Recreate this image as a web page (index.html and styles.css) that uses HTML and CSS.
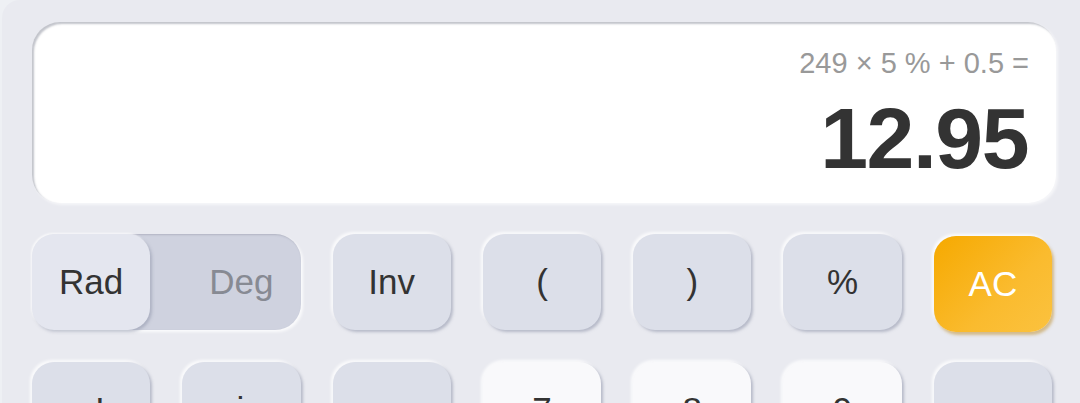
FILE: index.html
```html
<!DOCTYPE html>
<html lang="en">
<head>
    <meta charset="UTF-8">
    <meta name="viewport" content="width=device-width, initial-scale=1.0">
    <title>Calculator</title>
    <link rel="stylesheet" href="styles.css">
</head>
<body>
    <div class="calculator">
        <div class="display">
            <div class="expression">249 × 5 % + 0.5 =</div>
            <div class="result">12.95</div>
        </div>

        <div class="keypad">
            <div class="toggle">
                <button class="toggle-on">Rad</button>
                <button class="toggle-off">Deg</button>
            </div>
            <button class="key">Inv</button>
            <button class="key">(</button>
            <button class="key">)</button>
            <button class="key">%</button>
            <button class="key clear">AC</button>

            <button class="key">x!</button>
            <button class="key">sin</button>
            <button class="key">e</button>
            <button class="key digit">7</button>
            <button class="key digit">8</button>
            <button class="key digit">9</button>
            <button class="key">−</button>
        </div>
    </div>
</body>
</html>
```

FILE: styles.css
```css
html, body {
    margin: 0;
    height: 403px;
    overflow: hidden;
}

body {
    font-family: 'Liberation Sans', Arial, sans-serif;
    background-color: #eef0f4;
    color: #333;
}

.calculator {
    margin-left: 2px;
    padding: 22px 24px 40px 30px;
    background-color: #e9eaf0;
    border-radius: 18px 0 0 0;
}

.display {
    width: 1024px;
    box-sizing: border-box;
    padding: 25px 27px 21px;
    background: #fff;
    border-radius: 28px;
    box-shadow: inset 2px 2px 2px rgba(120, 124, 140, 0.45),
                2px 2px 3px rgba(255, 255, 255, 0.6);
    text-align: right;
}

.expression {
    font-size: 29px;
    line-height: 33px;
    color: #999;
}

.result {
    margin-top: 14px;
    font-size: 86px;
    line-height: 88px;
    font-weight: bold;
    letter-spacing: -1.5px;
    margin-right: 1px;
    color: #333;
}

.keypad {
    width: 1020px;
    margin-top: 31px;
    display: grid;
    grid-template-columns: repeat(7, 1fr);
    grid-auto-rows: 96px;
    gap: 32px;
}

button {
    font-family: inherit;
    font-size: 35px;
    color: #333;
    border: none;
    padding: 0;
    cursor: pointer;
}

.key {
    background-color: #dcdfe9;
    border-radius: 22px;
    box-shadow: 2px 2px 3px rgba(140, 146, 168, 0.55),
                -2px -2px 3px rgba(255, 255, 255, 0.8);
}

.digit {
    background-color: #f9f9fb;
}

.clear {
    margin-top: 2px;
    margin-bottom: -2px;
    color: #fff;
    background: linear-gradient(135deg, #f6a900 0%, #fabb2e 60%, #fbc23f 100%);
    box-shadow: 2px 3px 3px rgba(190, 140, 40, 0.5),
                -2px -2px 3px rgba(255, 255, 255, 0.8);
}

.toggle {
    grid-column: span 2;
    display: grid;
    grid-template-columns: 1fr 1fr;
    gap: 32px;
    background-color: #cfd2df;
    border-radius: 26px;
    box-shadow: inset 1px 1px 2px rgba(120, 124, 140, 0.35),
                2px 2px 3px rgba(255, 255, 255, 0.8);
}

.toggle-on {
    background-color: #e4e6ef;
    border-radius: 22px;
    box-shadow: 2px 2px 3px rgba(140, 146, 168, 0.5),
                -1px -1px 2px rgba(255, 255, 255, 0.8);
}

.toggle-off {
    background: none;
    color: #878a93;
}
```
